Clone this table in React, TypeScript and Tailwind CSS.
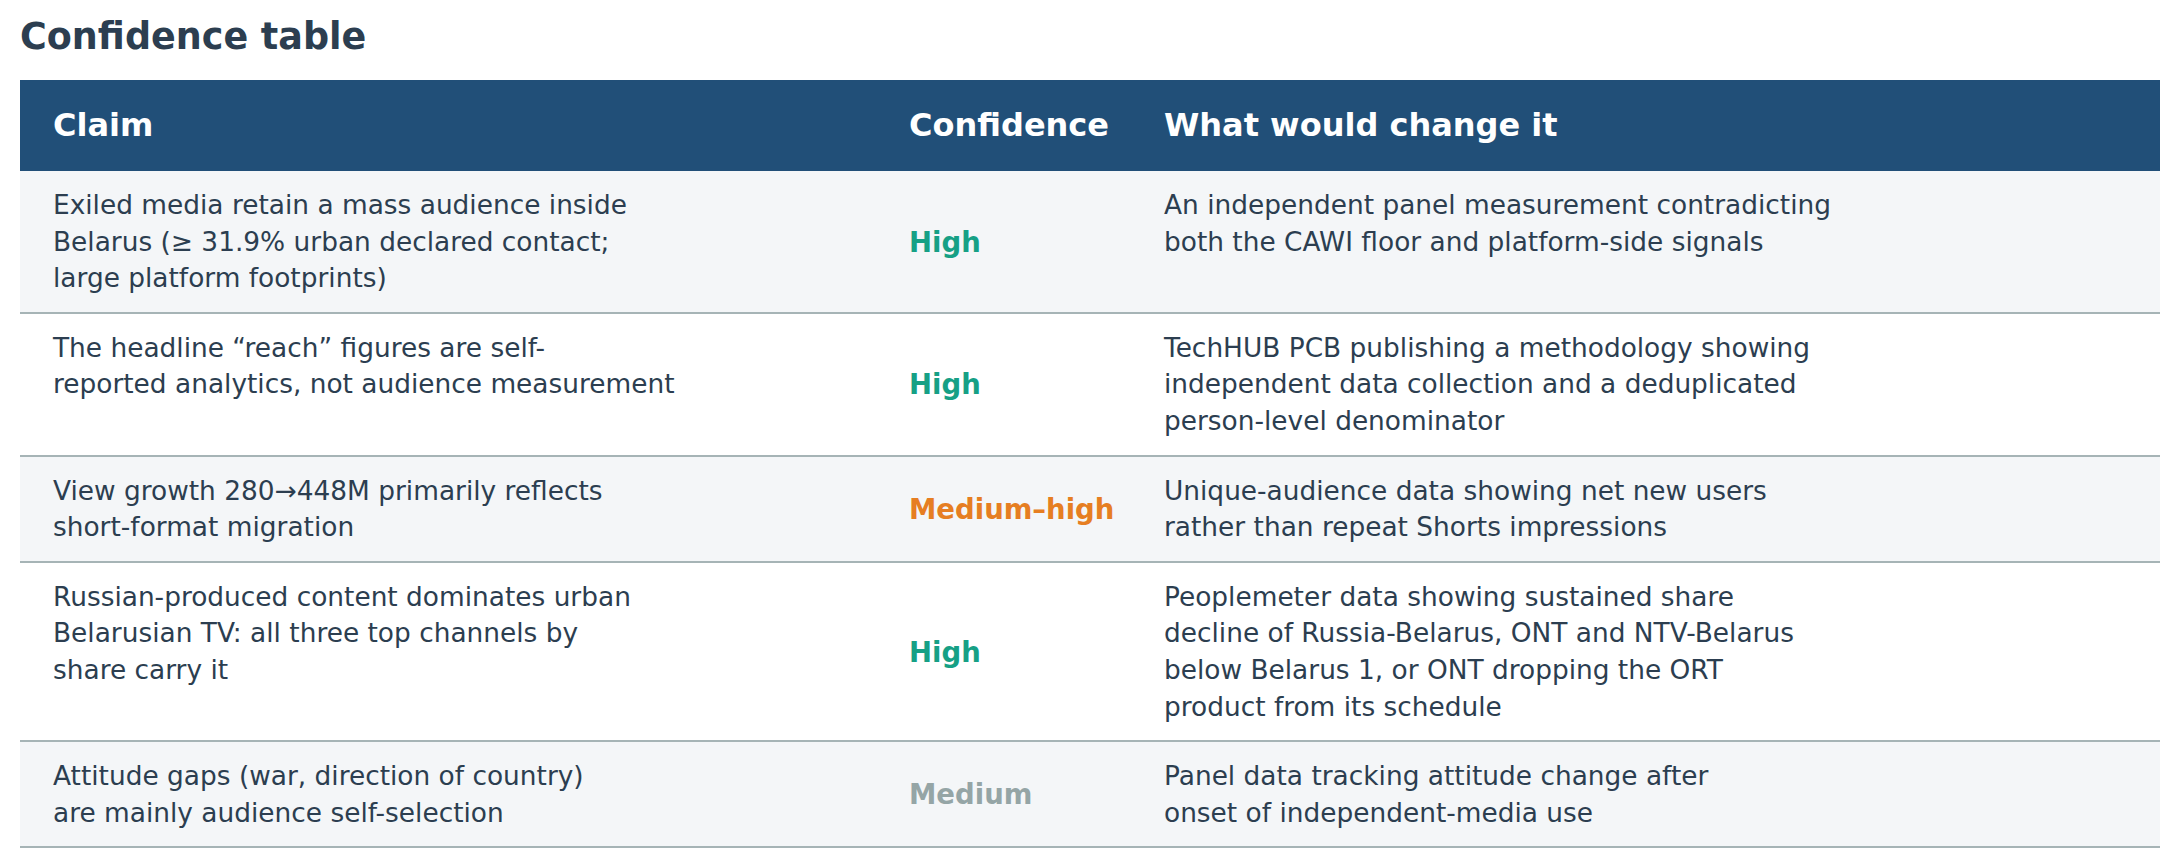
import React from "react";

type Level = "High" | "Medium–high" | "Medium";

const rows: { claim: string[]; level: Level; change: string[] }[] = [
  {
    claim: [
      "Exiled media retain a mass audience inside",
      "Belarus (≥ 31.9% urban declared contact;",
      "large platform footprints)",
    ],
    level: "High",
    change: [
      "An independent panel measurement contradicting",
      "both the CAWI floor and platform-side signals",
    ],
  },
  {
    claim: [
      "The headline “reach” figures are self-",
      "reported analytics, not audience measurement",
    ],
    level: "High",
    change: [
      "TechHUB PCB publishing a methodology showing",
      "independent data collection and a deduplicated",
      "person-level denominator",
    ],
  },
  {
    claim: ["View growth 280→448M primarily reflects", "short-format migration"],
    level: "Medium–high",
    change: [
      "Unique-audience data showing net new users",
      "rather than repeat Shorts impressions",
    ],
  },
  {
    claim: [
      "Russian-produced content dominates urban",
      "Belarusian TV: all three top channels by",
      "share carry it",
    ],
    level: "High",
    change: [
      "Peoplemeter data showing sustained share",
      "decline of Russia-Belarus, ONT and NTV-Belarus",
      "below Belarus 1, or ONT dropping the ORT",
      "product from its schedule",
    ],
  },
  {
    claim: [
      "Attitude gaps (war, direction of country)",
      "are mainly audience self-selection",
    ],
    level: "Medium",
    change: [
      "Panel data tracking attitude change after",
      "onset of independent-media use",
    ],
  },
];

function levelClass(l: Level) {
  if (l === "High") return "text-[#16a085]";
  if (l === "Medium–high") return "text-[#e67e22]";
  return "text-[#95a5a6]";
}

function Lines({ lines }: { lines: string[] }) {
  return (
    <div className="whitespace-nowrap">
      {lines.map((l, i) => (
        <div key={i}>{l}</div>
      ))}
    </div>
  );
}

export default function App() {
  return (
    <div
      className="min-h-[866px] bg-white px-[20px] pt-[15px] text-[#2c3e50]"
      style={{ fontFamily: '"DejaVu Sans", sans-serif' }}
    >
      <h1 className="mb-[21px] h-[44px] text-[36.5px] font-bold leading-[44px] text-[#2c3e50]">
        Confidence table
      </h1>
      <table className="w-[2140px] table-fixed border-collapse">
        <thead>
          <tr className="bg-[#214f78] text-white">
            <th className="w-[856px] px-[33px] pb-[26px] pt-[25px] text-left text-[32px] font-bold leading-[40px]">
              Claim
            </th>
            <th className="w-[255px] px-[33px] pb-[26px] pt-[25px] text-left text-[32px] font-bold leading-[40px]">
              Confidence
            </th>
            <th className="w-[1029px] px-[33px] pb-[26px] pt-[25px] text-left text-[32px] font-bold leading-[40px]">
              What would change it
            </th>
          </tr>
        </thead>
        <tbody>
          {rows.map((r, i) => (
            <tr
              key={i}
              className={`border-b-2 border-[#a6b4b6] ${
                i % 2 === 0 ? "bg-[#f4f6f8]" : "bg-white"
              }`}
            >
              <td className="px-[33px] pb-[15px] pt-[16px] align-top text-[26.4px] leading-[36.6px]">
                <Lines lines={r.claim} />
              </td>
              <td
                className={`whitespace-nowrap px-[33px] pb-[15px] pt-[16px] align-middle text-[27.5px] font-bold leading-[36.6px] ${levelClass(
                  r.level
                )}`}
              >
                {r.level}
              </td>
              <td className="px-[33px] pb-[15px] pt-[16px] align-top text-[26.4px] leading-[36.6px]">
                <Lines lines={r.change} />
              </td>
            </tr>
          ))}
        </tbody>
      </table>
    </div>
  );
}
